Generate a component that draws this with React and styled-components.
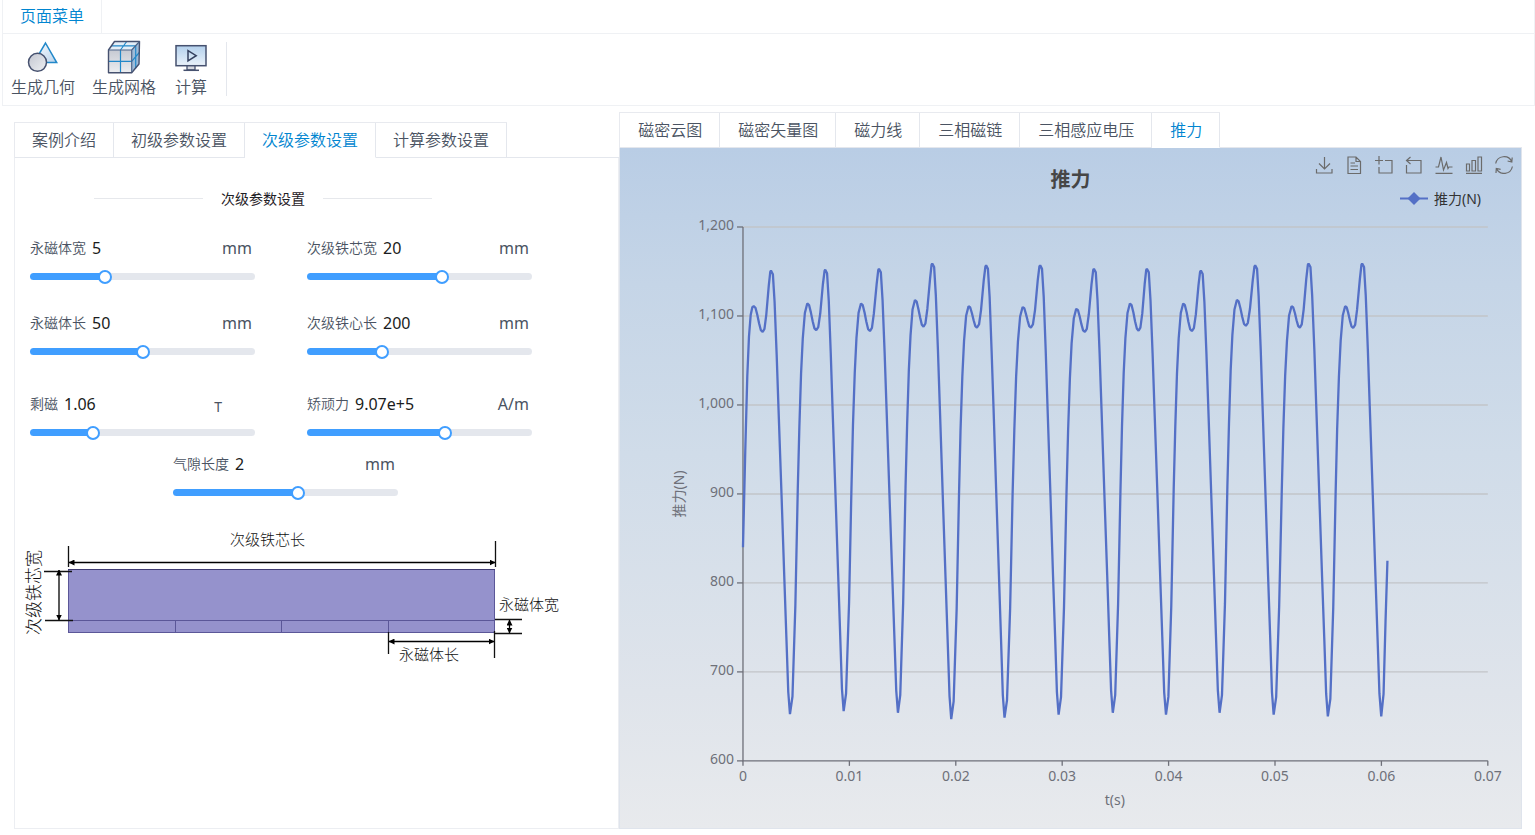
import React, { useState } from 'react'
import styled, { createGlobalStyle } from 'styled-components'

const CASE_TABS = ['案例介绍', '初级参数设置', '次级参数设置', '计算参数设置']
const RESULT_TABS = ['磁密云图', '磁密矢量图', '磁力线', '三相磁链', '三相感应电压', '推力']

const PARAM_ROWS = [
  { top: 28, items: [
    { id: 'magnetWidth', label: '永磁体宽', unit: 'mm', value: 5, min: 0, max: 15, step: 1 },
    { id: 'coreWidth', label: '次级铁芯宽', unit: 'mm', value: 20, min: 5, max: 30, step: 1 },
  ] },
  { top: 31, items: [
    { id: 'magnetLength', label: '永磁体长', unit: 'mm', value: 50, min: 0, max: 100, step: 1 },
    { id: 'coreLength', label: '次级铁心长', unit: 'mm', value: 200, min: 0, max: 600, step: 10 },
  ] },
  { top: 37, items: [
    { id: 'remanence', label: '剩磁', unit: 'T', value: 1.06, min: 0.5, max: 2.5, step: 0.01 },
    { id: 'coercivity', label: '矫顽力', unit: 'A/m', value: 907000, min: 600000, max: 1100000, step: 1000 },
  ] },
  { top: 16, indent: 143, items: [
    { id: 'airGap', label: '气隙长度', unit: 'mm', value: 2, min: 0, max: 3.6, step: 0.1 },
  ] },
]

// thrust extremes for each period: [ms, N] of hump, dip, peak, valley
const CYCLES = [
  [[1.01, 1111], [1.85, 1082], [2.63, 1151], [4.42, 652.5]],
  [[6.04, 1114], [6.89, 1084], [7.73, 1152], [9.46, 656]],
  [[11.09, 1114], [11.93, 1083], [12.78, 1153], [14.56, 654]],
  [[16.16, 1118], [16.97, 1088], [17.79, 1159], [19.57, 647]],
  [[21.2, 1111], [21.99, 1087], [22.85, 1157], [24.58, 648.5]],
  [[26.28, 1110], [27.06, 1087], [27.93, 1157], [29.66, 652]],
  [[31.32, 1108], [32.13, 1082], [32.98, 1153], [34.76, 654]],
  [[36.36, 1114], [37.18, 1083.5], [37.96, 1153], [39.75, 652]],
  [[41.37, 1114], [42.19, 1083], [43.03, 1151], [44.79, 654]],
  [[46.42, 1118], [47.26, 1089], [48.14, 1157], [49.87, 652]],
  [[51.56, 1111], [52.34, 1087], [53.15, 1159], [54.97, 650]],
  [[56.59, 1111], [57.34, 1086.5], [58.19, 1159], [59.98, 650]],
]

// normalised shape of each section between two extremes
const RISE = [[0.14, 0.043], [0.31, 0.265], [0.45, 0.547], [0.54, 0.7], [0.64, 0.83], [0.74, 0.915], [0.86, 0.977], [1, 1]]
const SAG = [[0.2, 0.06], [0.4, 0.33], [0.6, 0.66], [0.8, 0.93], [1, 1]]
const CLIMB = [[0.22, 0.05], [0.44, 0.28], [0.74, 0.755], [0.92, 0.98], [1, 1]]
const FALL = [[0.1, 0.008], [0.19, 0.07], [0.3, 0.19], [0.4, 0.315], [0.56, 0.515], [0.7, 0.69], [0.81, 0.826], [0.91, 0.95], [1, 1]]

function between(from, to, shape) {
  return shape.map(([t, u]) => [from[0] + (to[0] - from[0]) * t, from[1] + (to[1] - from[1]) * u])
}

function buildSeries() {
  const points = [[0, 840], [0.22, 949], [0.4, 1032], [0.56, 1077], [0.72, 1101], [0.88, 1110]]
  CYCLES.forEach(([hump, dip, peak, valley], i) => {
    if (i === 0) points.push(hump)
    else points.push(...between(CYCLES[i - 1][3], hump, RISE))
    points.push(...between(hump, dip, SAG), ...between(dip, peak, CLIMB), ...between(peak, valley, FALL))
  })
  points.push([60.2, 675], [60.39, 757], [60.57, 825])
  return points
}

const PLOT = { left: 123, right: 868, top: 15, bottom: 549 }
const xOf = (ms) => PLOT.left + (ms / 70) * (PLOT.right - PLOT.left)
const yOf = (n) => PLOT.bottom - ((n - 600) / 600) * (PLOT.bottom - PLOT.top)
const SERIES = buildSeries().map(([t, n]) => `${xOf(t).toFixed(1)},${yOf(n).toFixed(1)}`).join(' ')

function GeometryIcon() {
  return (
    <svg width="34" height="34" viewBox="0 0 34 34" aria-hidden="true">
      <defs>
        <linearGradient id="geoTri" x1="0" y1="0" x2="1" y2="1">
          <stop offset="0" stopColor="#ffffff" />
          <stop offset="1" stopColor="#b9d3ec" />
        </linearGradient>
        <linearGradient id="geoBall" x1="0" y1="0" x2="1" y2="1">
          <stop offset="0" stopColor="#c3c6d0" />
          <stop offset="1" stopColor="#eef0f3" />
        </linearGradient>
      </defs>
      <path d="M19.5 3 L30.7 22.6 H8 Z" fill="url(#geoTri)" stroke="#2288c9" strokeWidth="1.5" />
      <circle cx="11.5" cy="22.3" r="9" fill="url(#geoBall)" stroke="#46516f" strokeWidth="1.5" />
    </svg>
  )
}

function MeshIcon() {
  return (
    <svg width="34" height="34" viewBox="0 0 34 34" aria-hidden="true" strokeLinejoin="round">
      <defs>
        <linearGradient id="meshFront" x1="0" y1="0" x2="0" y2="1">
          <stop offset="0" stopColor="#c6c9d2" />
          <stop offset="1" stopColor="#eceef1" />
        </linearGradient>
      </defs>
      <path d="M1 10 L7 1.5 H32.5 L24.7 10 Z" fill="#e4eef7" />
      <path d="M24.7 10 L32.5 1.5 L32 24 L24.7 32.7 Z" fill="#9dbbd8" />
      <path d="M1.5 10 H24.7 V32.7 H1.5 Z" fill="url(#meshFront)" />
      <path d="M13.5 10 L19.7 1.5 M4.2 5.8 H28.7 V28.2 M13.5 10 V32.5 M1.5 21.3 H24.7 L32.3 12.5" fill="none" stroke="#2288c9" strokeWidth="1.2" />
      <path d="M1.5 10 L7.5 1.5 H32.5 L32 24 L24.7 32.7 H1.5 Z" fill="none" stroke="#46516f" strokeWidth="1.4" />
      <path d="M1.5 10 H24.7 L32.5 1.5 M24.7 10 V32" fill="none" stroke="#4d6489" strokeWidth="1.2" />
    </svg>
  )
}

function ComputeIcon() {
  return (
    <svg width="34" height="34" viewBox="0 0 34 34" aria-hidden="true">
      <defs>
        <linearGradient id="screen" x1="0" y1="0" x2="0" y2="1">
          <stop offset="0" stopColor="#b3d0ec" />
          <stop offset="1" stopColor="#eaf2fa" />
        </linearGradient>
      </defs>
      <path d="M13 26 V30 H21 V26" fill="#d5d8df" stroke="#46516f" strokeWidth="1.3" />
      <path d="M9.5 30.3 H25" stroke="#46516f" strokeWidth="1.5" />
      <rect x="2" y="5.7" width="30" height="20" fill="url(#screen)" stroke="#46516f" strokeWidth="1.5" />
      <path d="M14 10.6 L22.2 15.7 L14 20.8 Z" fill="none" stroke="#35415f" strokeWidth="1.5" />
    </svg>
  )
}

const TOOLBOX = [
  { name: '保存为图片', d: 'M9.5 1 V13 M4 7.5 L9.5 13 L15 7.5 M1.5 13 V17 H17 V13' },
  { name: '数据视图', d: 'M3 1 H11 L15.5 5.5 V17.5 H3 Z M11 1 V5.5 H15.5 M5.5 7 H10 M5.5 10 H13 M5.5 13.5 H13' },
  { name: '区域缩放', d: 'M4 0 V8.5 M4 11 V17 H17 V4.5 H10 M0 4.5 H8' },
  { name: '区域缩放还原', d: 'M1.5 9 V17 H16 V4.5 H1.5 M5.5 1 L1.5 4.5 L5.5 8' },
  { name: '切换为折线图', d: 'M0.5 11 H3.5 L6 1 L8.5 14 L11.5 6.5 L13 12.5 L14 11 H17.5 M0.5 17.3 H17.5' },
  { name: '切换为柱状图', d: 'M1.5 8 H4.5 V15 H1.5 Z M7 4.5 H10.5 V15 H7 Z M13 1 H16.5 V15 H13 Z M1 17.3 H17' },
  { name: '还原', d: 'M0.7 7.5 A8.5 8.5 0 0 1 16.8 5.8 M17.2 1.5 L16.8 6 L12.6 5 M17.4 10.5 A8.5 8.5 0 0 1 1.4 12.6 M1 17 L1.3 12.4 L5.6 13.3' },
]

function Tabs({ items, active, onChange, lead, label }) {
  return (
    <TabBar>
      <TabList role="tablist" aria-label={label}>
        {items.map((item) => (
          <Tab key={item} type="button" role="tab" aria-selected={item === active} $active={item === active} $lead={lead} onClick={() => onChange(item)}>
            {item}
          </Tab>
        ))}
      </TabList>
    </TabBar>
  )
}

function Param({ param, value, onChange }) {
  const filled = ((value - param.min) / (param.max - param.min)) * 100
  const text = value >= 100000 ? value.toExponential(2) : value
  return (
    <ParamBox>
      <ParamHead>
        <ParamLabel htmlFor={param.id}>{param.label}</ParamLabel>
        <ParamValue htmlFor={param.id}>{text}</ParamValue>
        <ParamUnit $small={param.unit === 'T'}>{param.unit}</ParamUnit>
      </ParamHead>
      <Track style={{ '--filled': `${filled}%` }}>
        <Range id={param.id} type="range" min={param.min} max={param.max} step={param.step} value={value} onChange={(e) => onChange(Number(e.target.value))} />
      </Track>
    </ParamBox>
  )
}

function SecondaryDiagram() {
  return (
    <Diagram viewBox="0 0 560 160" role="img" aria-label="次级结构尺寸">
      <defs>
        <marker id="arrow" viewBox="0 0 6 6" refX="5.5" refY="3" markerWidth="6" markerHeight="6" markerUnits="userSpaceOnUse" orient="auto-start-reverse">
          <path d="M0 0 L6 3 L0 6 Z" fill="#000" />
        </marker>
      </defs>
      <rect x="53.5" y="49.5" width="426" height="63" fill="#9592cc" stroke="#5b5798" />
      <path d="M53 49.5 H480" stroke="#3f3b72" />
      <path d="M53 100.5 H480 M160.5 100 V113 M266.5 100 V113 M373.5 100 V113" stroke="#5b5798" />
      <path d="M53.5 26 V47 M480.5 21 V47 M29 51.5 H57 M30 100.5 H58 M480 99.5 H507 M480 113.5 H507 M373.5 112 V134 M479.5 111 V138" stroke="#111" strokeWidth="1.3" />
      <g stroke="#000" strokeWidth="1.3">
        <path d="M54 42.5 H480" markerStart="url(#arrow)" markerEnd="url(#arrow)" />
        <path d="M44 50 V100" markerStart="url(#arrow)" markerEnd="url(#arrow)" />
        <path d="M494.5 100 V113" markerStart="url(#arrow)" markerEnd="url(#arrow)" />
        <path d="M374 121.5 H479" markerStart="url(#arrow)" markerEnd="url(#arrow)" />
      </g>
      <DiagramText x="215" y="25">次级铁芯长</DiagramText>
      <DiagramText x="484" y="90">永磁体宽</DiagramText>
      <DiagramText x="384" y="140">永磁体长</DiagramText>
      <DiagramText $large transform="translate(25 115) rotate(-90)">次级铁芯宽</DiagramText>
    </Diagram>
  )
}

function ThrustChart() {
  const yTicks = [600, 700, 800, 900, 1000, 1100, 1200]
  const xTicks = [0, 10, 20, 30, 40, 50, 60, 70]
  return (
    <Plot viewBox="0 0 901 616" role="img" aria-label="推力曲线">
      {yTicks.slice(1).map((n) => (
        <line key={n} x1={PLOT.left} x2={PLOT.right} y1={yOf(n)} y2={yOf(n)} stroke="#c2c4c8" strokeWidth="1.4" />
      ))}
      <g stroke="#6e7079" strokeWidth="1.3">
        <path d={`M${PLOT.left} ${PLOT.top} V${PLOT.bottom} H${PLOT.right}`} fill="none" />
        {yTicks.map((n) => (
          <line key={n} x1={PLOT.left - 6} x2={PLOT.left} y1={yOf(n)} y2={yOf(n)} />
        ))}
        {xTicks.map((t) => (
          <line key={t} x1={xOf(t)} x2={xOf(t)} y1={PLOT.bottom} y2={PLOT.bottom + 5} />
        ))}
      </g>
      {yTicks.map((n) => (
        <AxisText key={n} x="114" y={yOf(n) + 3} textAnchor="end">{n.toLocaleString('en-US')}</AxisText>
      ))}
      {xTicks.map((t) => (
        <AxisText key={t} x={xOf(t)} y="569" textAnchor="middle">{t === 0 ? '0' : (t / 1000).toFixed(2)}</AxisText>
      ))}
      <AxisText x="495" y="593" textAnchor="middle">t(s)</AxisText>
      <AxisText transform="translate(64 282) rotate(-90)" textAnchor="middle">推力(N)</AxisText>
      <polyline points={SERIES} fill="none" stroke="#5470c6" strokeWidth="2.3" strokeLinejoin="bevel" />
    </Plot>
  )
}

function App() {
  const [caseTab, setCaseTab] = useState('次级参数设置')
  const [resultTab, setResultTab] = useState('推力')
  const [values, setValues] = useState(() =>
    Object.fromEntries(PARAM_ROWS.flatMap((row) => row.items).map((p) => [p.id, p.value]))
  )

  return (
    <Page>
      <GlobalStyle />
      <Header>
        <MenuTabs role="tablist" aria-label="菜单">
          <MenuTab type="button" role="tab" aria-selected="true">页面菜单</MenuTab>
        </MenuTabs>
        <Toolbar>
          <ToolButton type="button"><GeometryIcon />生成几何</ToolButton>
          <ToolButton type="button"><MeshIcon />生成网格</ToolButton>
          <ToolButton type="button"><ComputeIcon />计算</ToolButton>
          <Separator />
        </Toolbar>
      </Header>
      <Main>
        <CaseColumn>
          <Tabs items={CASE_TABS} active={caseTab} onChange={setCaseTab} lead={17} label="案例" />
          <Panel>
            <SectionTitle>次级参数设置</SectionTitle>
            {PARAM_ROWS.map((row) => (
              <ParamRow key={row.items[0].id} $top={row.top} $indent={row.indent}>
                {row.items.map((p) => (
                  <Param key={p.id} param={p} value={values[p.id]} onChange={(v) => setValues({ ...values, [p.id]: v })} />
                ))}
              </ParamRow>
            ))}
            <SecondaryDiagram />
          </Panel>
        </CaseColumn>
        <Column>
          <Tabs items={RESULT_TABS} active={resultTab} onChange={setResultTab} lead={18} label="结果" />
          <ChartPanel>
            <ChartHeader>
              <ChartTitle>推力</ChartTitle>
              <ChartTools>
                <Toolbox>
                  {TOOLBOX.map((tool) => (
                    <IconButton key={tool.name} type="button" aria-label={tool.name}>
                      <svg width="18" height="18" viewBox="0 0 18 18" fill="none" stroke="currentColor" strokeWidth="1.2">
                        <path d={tool.d} />
                      </svg>
                    </IconButton>
                  ))}
                </Toolbox>
                <Legend>
                  <svg width="28" height="14" viewBox="0 0 28 14" aria-hidden="true">
                    <path d="M0 7.5 H28" stroke="#5470c6" strokeWidth="2" />
                    <path d="M14 1 L20.5 7.5 L14 14 L7.5 7.5 Z" fill="#5470c6" />
                  </svg>
                  推力(N)
                </Legend>
              </ChartTools>
            </ChartHeader>
            <ThrustChart />
          </ChartPanel>
        </Column>
      </Main>
    </Page>
  )
}

export default App

const GlobalStyle = createGlobalStyle`
    * {
        box-sizing: border-box;
    }

    body {
        margin: 0;
        background: #fff;
        color: #4a5362;
        font-family: "Noto Sans", "Noto Sans CJK SC", sans-serif;
        font-size: 16px;
    }

    button {
        margin: 0;
        padding: 0;
        border: 0;
        background: none;
        color: inherit;
        font: inherit;
        font-weight: 350;
        cursor: pointer;
    }

    svg {
        display: block;
    }
`
const Page = styled.div`
    padding-left: 2px;
`
const Header = styled.header`
    border: 1px solid #eff1f4;
    border-top: 0;
`
const MenuTabs = styled.div`
    display: flex;
    height: 34px;
    border-bottom: 1px solid #eff1f4;
`
const MenuTab = styled.button`
    padding: 0 17px 2px 17px;
    border-right: 1px solid #eff1f4;
    color: #0085d0;
    line-height: 24px;
`
const Toolbar = styled.div`
    display: flex;
    align-items: center;
    gap: 17px;
    height: 71px;
    padding: 0 9px 2px 8px;
`
const ToolButton = styled.button`
    display: flex;
    flex-direction: column;
    align-items: center;
    min-width: 36px;
    gap: 2px;
    line-height: 22px;
`
const Separator = styled.div`
    width: 1px;
    height: 54px;
    background: #e4e7ed;
`
const Main = styled.main`
    display: grid;
    grid-template-columns: calc(40% + 2px) minmax(0, 1fr);
    padding: 6px 13px 6px 12px;
`
const Column = styled.section`
    display: flex;
    flex-direction: column;
    min-width: 0;
`
const CaseColumn = styled(Column)`
    padding-top: 10px;
`
const TabBar = styled.div`
    display: flex;
    border-bottom: 1px solid #e4e7ed;
`
const TabList = styled.div`
    display: flex;
    margin-bottom: -1px;
    border-top: 1px solid #e8eaef;
    border-left: 1px solid #e8eaef;
`
const Tab = styled.button`
    height: 35px;
    padding: 0 17px 2px ${(p) => p.$lead}px;
    border-right: 1px solid #e4e7ed;
    border-bottom: 1px solid ${(p) => (p.$active ? '#fff' : '#e4e7ed')};
    color: ${(p) => (p.$active ? '#0085d0' : 'inherit')};
    white-space: nowrap;
`
const Panel = styled.div`
    flex: 1;
    padding: 30px 15px 24px;
    border: 1px solid #eceef2;
    border-top: 0;
`
const SectionTitle = styled.h2`
    display: flex;
    align-items: center;
    gap: 18px;
    width: 338px;
    height: 20px;
    margin: 0 0 0 64px;
    color: #1f2126;
    font-size: 14px;
    font-weight: 400;

    &:before, &:after {
        content: "";
        flex: 1;
        height: 1px;
        background: #e6e8ec;
    }
`
const ParamRow = styled.div`
    display: flex;
    gap: 52px;
    margin-top: ${(p) => p.$top}px;
    padding-left: ${(p) => p.$indent || 0}px;
`
const ParamBox = styled.div`
    width: 225px;
`
const ParamHead = styled.div`
    display: flex;
    align-items: center;
    gap: 6px;
    height: 24px;
    margin-bottom: 13px;
`
const ParamLabel = styled.label`
    padding-bottom: 2px;
    font-size: 14px;
    font-weight: 350;
`
const ParamValue = styled.output`
    color: #1a1c20;
`
const ParamUnit = styled.span`
    margin-left: auto;
    padding: ${(p) => (p.$small ? '4px 33px 0 0' : '0 3px 0 0')};
    font-size: ${(p) => (p.$small ? 14 : 16)}px;
`
const Track = styled.div`
    display: flex;
    align-items: center;
    height: 7px;
    border-radius: 4px;
    background: linear-gradient(to right, #409eff var(--filled), #e4e7ed var(--filled));
`
// the control reaches half a thumb past the track on both sides
const Range = styled.input`
    flex: none;
    width: calc(100% + 14px);
    height: 14px;
    margin: 0 -7px;
    background: transparent;
    appearance: none;
    cursor: pointer;

    &::-webkit-slider-thumb {
        width: 14px;
        height: 14px;
        border: 2px solid #409eff;
        border-radius: 50%;
        background: #fff;
        appearance: none;
    }
`
const Diagram = styled.svg`
    width: 560px;
    max-width: 100%;
    height: auto;
    margin: 24px 0 0 -15px;
`
const DiagramText = styled.text`
    fill: #111;
    font-family: "Noto Sans CJK SC", sans-serif;
    font-size: ${(p) => (p.$large ? 17 : 15)}px;
    font-weight: 300;
`
const ChartPanel = styled.div`
    border: 1px solid #dfe4ec;
    border-top: 0;
    background: linear-gradient(to bottom, #b9cde5, #c5d5e7 20%, #d0dce9 45%, #dfe4eb 80%, #e8eaed);
`
const ChartHeader = styled.div`
    display: grid;
    grid-template-columns: 1fr auto 1fr;
    padding: 8px 8px 4px;
`
const ChartTitle = styled.h1`
    grid-column: 2;
    margin: 12px 0 0;
    color: #464646;
    font-size: 20px;
    line-height: 24px;
`
const ChartTools = styled.div`
    display: flex;
    flex-direction: column;
    align-items: flex-end;
    gap: 14px;
`
const Toolbox = styled.div`
    display: flex;
    gap: 12px;
`
const IconButton = styled.button`
    color: #6b6b6b;
`
const Legend = styled.div`
    display: flex;
    align-items: center;
    gap: 6px;
    height: 20px;
    margin-right: 32px;
    color: #333;
    font-size: 14px;
`
const Plot = styled.svg`
    width: 100%;
    height: auto;
`
const AxisText = styled.text`
    fill: #6e7079;
    font-size: 14px;
`
